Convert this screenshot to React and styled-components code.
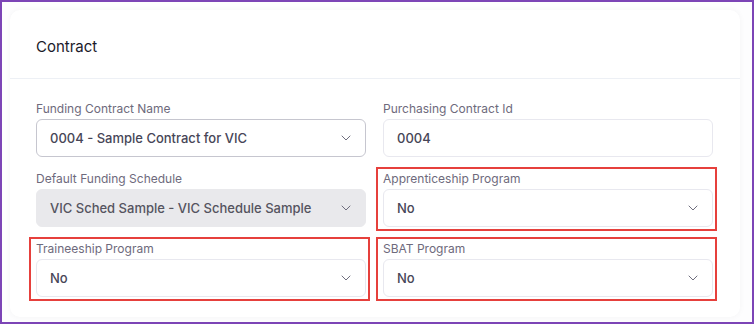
import React from "react";
import styled, { createGlobalStyle } from "styled-components";
import { ChevronDown } from "lucide-react";

const GlobalStyle = createGlobalStyle`
  * { box-sizing: border-box; }
  body {
    margin: 0;
    background: #ffffff;
    font-family: Inter, "Noto Sans", sans-serif;
  }
`;

// --- FRAME ---
const Frame = styled.div`
  width: 754px;
  height: 324px;
  border: 2px solid #7c44b6;
  background: #fdfdfe;
  padding: 8px;
`;

// --- CARD ---
const Card = styled.section`
  width: 730px;
  background: #ffffff;
  border-radius: 10px;
  box-shadow: 0 0 6px rgba(30, 30, 60, 0.04);
`;

const CardHeader = styled.header`
  height: 69px;
  padding: 27px 26px 0;
  border-bottom: 1px solid #edf0f5;
`;

const Title = styled.h2`
  margin: 0;
  font-size: 15px;
  line-height: 20px;
  font-weight: 400;
  color: #1a1a2a;
`;

// --- FORM GRID ---
const Grid = styled.div`
  display: grid;
  grid-template-columns: 330px 330px;
  column-gap: 17px;
  row-gap: 14px;
  padding: 22px 26px 20px;
`;

const Field = styled.div`
  position: relative;
  display: flex;
  flex-direction: column;
  gap: 2px;

  ${(p) =>
    p.$flagged &&
    `
    &::after {
      content: "";
      position: absolute;
      top: -4px;
      left: -7px;
      right: -4px;
      bottom: -4px;
      border: 2px solid #e6403c;
      pointer-events: none;
    }
  `}
`;

const Label = styled.label`
  font-size: 12px;
  line-height: 16px;
  color: #6e6a7c;
`;

const Control = styled.div`
  height: 38px;
  display: flex;
  align-items: center;
  justify-content: space-between;
  padding: 0 11px 0 13px;
  border-radius: 6px;
  border: 1px solid ${(p) => (p.$strong ? "#c6c6cf" : "#e8e8ef")};
  background: ${(p) => (p.$disabled ? "#e9e9ec" : "#ffffff")};
  border-color: ${(p) => (p.$disabled ? "#e9e9ec" : undefined)};
  font-size: 13px;
  font-weight: 500;
  color: ${(p) => (p.$disabled ? "#55545f" : "#474657")};
`;

const Chevron = styled(ChevronDown)`
  color: #6f6e7e;
  flex-shrink: 0;
`;

function SelectField({ label, value, strong, disabled, flagged, select = true }) {
  return (
    <Field $flagged={flagged}>
      <Label>{label}</Label>
      <Control $strong={strong} $disabled={disabled}>
        <span>{value}</span>
        {select && <Chevron size={16} strokeWidth={1.5} />}
      </Control>
    </Field>
  );
}

export default function App() {
  return (
    <>
      <GlobalStyle />
      <Frame>
        <Card>
          <CardHeader>
            <Title>Contract</Title>
          </CardHeader>
          <Grid>
            <SelectField
              label="Funding Contract Name"
              value="0004 - Sample Contract for VIC"
              strong
            />
            <SelectField label="Purchasing Contract Id" value="0004" select={false} />
            <SelectField
              label="Default Funding Schedule"
              value="VIC Sched Sample - VIC Schedule Sample"
              disabled
            />
            <SelectField label="Apprenticeship Program" value="No" flagged />
            <SelectField label="Traineeship Program" value="No" flagged />
            <SelectField label="SBAT Program" value="No" flagged />
          </Grid>
        </Card>
      </Frame>
    </>
  );
}
